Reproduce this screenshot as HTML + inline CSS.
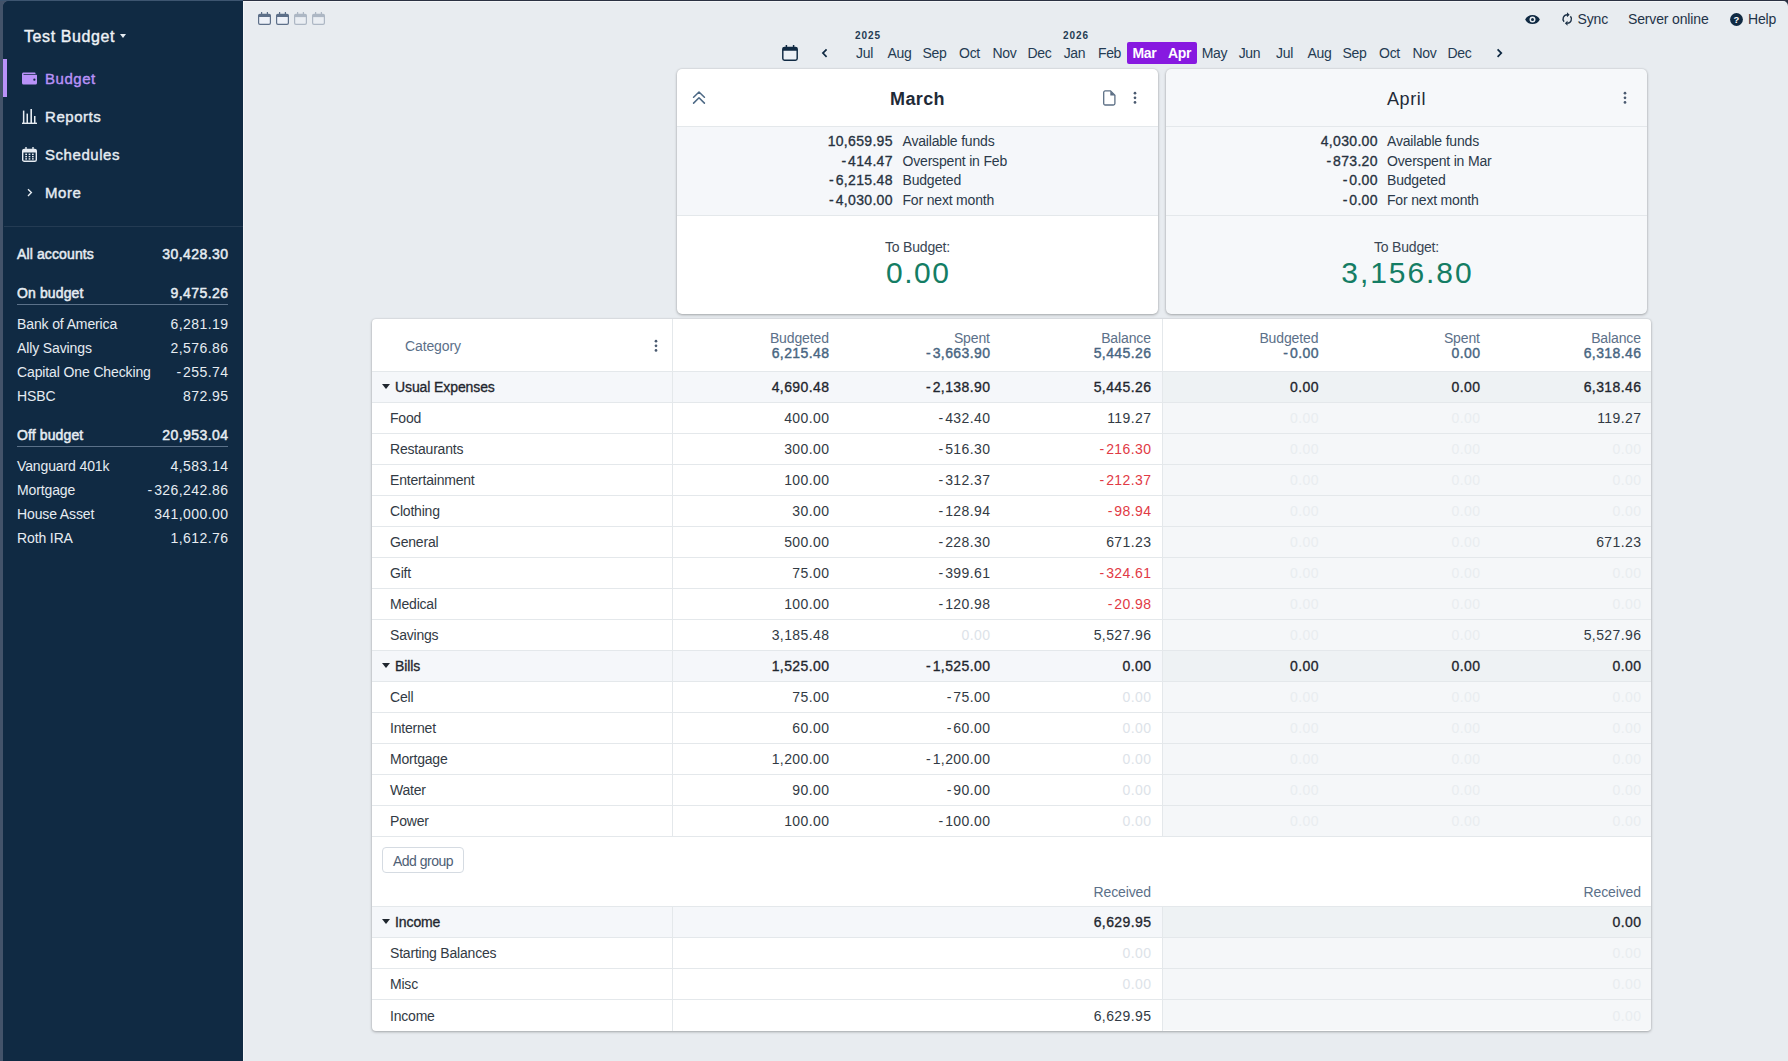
<!DOCTYPE html>
<html lang="en">
<head>
<meta charset="utf-8">
<title>Budget - Actual</title>
<style>
*{box-sizing:border-box}
html,body{margin:0;padding:0}
body{width:1788px;height:1061px;overflow:hidden;position:relative;background:#43536a;font-family:"Liberation Sans",sans-serif;font-size:13px;color:#102a43;line-height:1.5}
.abs{position:absolute}
.m{letter-spacing:2px}
#app{position:absolute;left:3px;top:1px;width:1785px;height:1060px;background:#102a43;border-top-left-radius:6px;border-top-right-radius:5px;overflow:hidden}
#topline{position:absolute;left:0;top:0;width:1788px;height:1px;background:linear-gradient(90deg,#3d5570 0,#3d5570 243px,#2b3142 243px)}
#hl{position:absolute;left:240px;top:0;width:1545px;height:1060px;background:#e8ecf0;box-shadow:inset 1px 1px 0 rgba(255,255,255,.5)}
#side{position:absolute;left:0;top:0;width:240px;height:1060px;background:#102a43;color:#e6ecf2}
#side .title{position:absolute;left:21px;top:25px;height:22px;line-height:22px;font-size:16px;font-weight:400;-webkit-text-stroke:.4px currentColor;color:#eef2f6;letter-spacing:.6px}
#side .caret{position:absolute;left:117px;top:33px;width:0;height:0;border-left:3.6px solid transparent;border-right:3.6px solid transparent;border-top:4.6px solid #e6ecf2}
.nav{position:absolute;left:0;width:240px;height:38px;line-height:38px;font-size:15px;font-weight:400;-webkit-text-stroke:.4px currentColor;color:#e6ecf2;letter-spacing:.55px}
.nav span{position:absolute;left:42px;top:1px}
.nav svg{position:absolute;left:19px;top:12px}
.nav.sel{color:#b992f8}
.nav.sel:before{content:"";position:absolute;left:0;top:0;width:4px;height:38px;background:#b992f8}
#side .hr{position:absolute;left:1px;top:225px;width:239px;height:1px;background:#243b53}
.acct{position:absolute;left:14px;width:211px;height:20px;line-height:20px;font-size:14px;color:#e6ecf2;letter-spacing:-.12px;white-space:nowrap}
.acct .n{position:absolute;right:0;top:0;font-size:14px;letter-spacing:.42px;margin-right:-.42px}
.acct.h{font-weight:400;-webkit-text-stroke:.5px currentColor;letter-spacing:.12px;font-size:14px}
.acct.u:after{content:"";position:absolute;left:0;right:0;top:21px;height:1px;background:#5b7189}
/* top bar */
.tb{position:absolute;top:8px;height:20px;line-height:20px;font-size:14px;color:#1f3348;letter-spacing:-.15px;white-space:nowrap}
/* month picker */
.mp{position:absolute;top:41px;width:35px;height:22px;line-height:23px;text-align:center;font-size:14px;color:#243b53;letter-spacing:-.3px}
.mp.s{background:#8719e0;color:#fff;font-weight:700;letter-spacing:-.35px;font-size:14px}
.yr{position:absolute;top:29px;height:12px;line-height:12px;font-size:10px;font-weight:700;color:#243b53;letter-spacing:.9px}
/* cards */
.card{position:absolute;top:68px;width:481px;height:245px;border-radius:5px;background:#fff;box-shadow:0 1px 3px rgba(0,0,0,.28),0 0 2px rgba(0,0,0,.12);overflow:hidden}
.card .hd{position:absolute;left:0;top:0;width:100%;height:58px;border-bottom:1px solid #e4e8eb}
.card .ttl{position:absolute;left:0;width:100%;top:16px;height:28px;line-height:28px;text-align:center;font-size:18px;color:#1f2a37}
.card .mid{position:absolute;left:0;top:58px;width:100%;height:89px;background:#f5f7fa;border-bottom:1px solid #e4e8eb}
.card .r{position:absolute;height:20px;line-height:20px;font-size:14px;color:#2b3a4a;white-space:nowrap}
.card .r.n{font-weight:400;-webkit-text-stroke:.32px currentColor;letter-spacing:.32px;text-align:right;color:#27323f}
.card .r.l{letter-spacing:-.18px}
.card .tbl{position:absolute;left:0;width:100%;top:168px;height:20px;line-height:20px;text-align:center;font-size:14px;color:#3a4654;letter-spacing:-.2px}
.card .amt{position:absolute;left:0;width:100%;top:186px;height:36px;line-height:36px;text-align:center;font-size:30px;color:#147d64;letter-spacing:1.5px;text-indent:1.5px}
/* table */
#tbl{position:absolute;left:369px;top:318px;width:1279px;height:712px;background:#fff;border-radius:4px;box-shadow:0 1px 3px rgba(0,0,0,.28),0 0 2px rgba(0,0,0,.12);overflow:hidden}
.vb{position:absolute;top:0;width:1px;height:712px;background:#e4e8eb;z-index:3}
.row{position:absolute;left:0;width:1279px;height:31px;border-bottom:1px solid #e4e8eb;line-height:30px;font-size:14px;color:#323a44}
.row.g{background:#f5f7fa;font-weight:400;-webkit-text-stroke:.32px currentColor;color:#1f262e}
.row .apr{position:absolute;left:791px;top:0;width:488px;height:30px;background:#f5f7f9}
.row.g .apr{background:#eef2f4}
.row .c{position:absolute;left:18px;top:0;letter-spacing:-.2px;white-space:nowrap}
.row.g .c{left:23px;top:0;letter-spacing:-.1px;font-size:14px}
.row.g .tri{position:absolute;left:9.7px;top:12.3px;width:0;height:0;border-left:4.3px solid transparent;border-right:4.3px solid transparent;border-top:5.6px solid #1f262e}
.v{position:absolute;top:0;white-space:nowrap;letter-spacing:.4px;margin-right:-.4px;z-index:2}
.v.z{color:#dde3e9}
.v.az{color:#e9edf0}
.v.neg{color:#e13a45}
.hdr{position:absolute;left:0;top:0;width:1279px;height:53px;border-bottom:1px solid #e4e8eb;color:#5b7089;font-size:14px}
.hdr .t{position:absolute;white-space:nowrap;height:16px;line-height:16px;letter-spacing:-.12px;margin-right:.12px}
.hdr .t.b{font-weight:400;-webkit-text-stroke:.4px currentColor;letter-spacing:.4px;margin-right:-.4px;color:#486581}
.rcv{position:absolute;white-space:nowrap;height:16px;line-height:16px;letter-spacing:-.12px;margin-right:.12px;color:#5b7089;font-size:14px}
#addg{position:absolute;left:10px;top:528px;width:82px;height:26px;line-height:27px;border:1px solid #d5dbe2;border-radius:4px;text-align:center;font-size:14px;color:#4e6075;letter-spacing:-.5px;background:#fff}
</style>
</head>
<body>
<div class="abs" style="right:0;top:0;width:8px;height:8px;background:#2b3142"></div>
<div id="app">
<div id="hl"></div>
<div id="side">
<div class="title">Test Budget</div><div class="caret"></div>
<div class="nav sel" style="top:58px"><svg width="15" height="15" viewBox="0 0 20 20"><path fill="currentColor" d="M0 4c0-1.1.9-2 2-2h15a1 1 0 0 1 1 1v1H2v1h17a1 1 0 0 1 1 1v10a2 2 0 0 1-2 2H2a2 2 0 0 1-2-2V4zm16.5 9a1.5 1.5 0 1 0 0-3 1.5 1.5 0 0 0 0 3z"/></svg><span>Budget</span></div>
<div class="nav" style="top:96px"><svg width="15" height="15" viewBox="0 0 15 15"><g fill="currentColor"><rect x="0" y="13.6" width="15" height="1.4"/><rect x="0.9" y="1.6" width="1.5" height="12.5"/><rect x="4.5" y="4.6" width="1.5" height="9.5"/><rect x="8.4" y="0" width="1.6" height="14"/><rect x="12" y="7" width="1.5" height="7"/></g></svg><span>Reports</span></div>
<div class="nav" style="top:134px"><svg width="15" height="15" viewBox="0 0 15 15"><g fill="none" stroke="currentColor"><rect x="0.7" y="2.4" width="13.6" height="11.9" rx="1.6" stroke-width="1.4"/><path d="M0.7 4.2h13.6" stroke-width="2.6"/><path d="M4 0v3M11 0v3" stroke-width="1.4"/></g><g fill="currentColor"><rect x="3.3" y="6.6" width="1.7" height="1.4"/><rect x="6.65" y="6.6" width="1.7" height="1.4"/><rect x="10" y="6.6" width="1.7" height="1.4"/><rect x="3.3" y="8.9" width="1.7" height="1.4"/><rect x="6.65" y="8.9" width="1.7" height="1.4"/><rect x="10" y="8.9" width="1.7" height="1.4"/><rect x="3.3" y="11.2" width="1.7" height="1.4"/><rect x="6.65" y="11.2" width="1.7" height="1.4"/><rect x="10" y="11.2" width="1.7" height="1.4"/></g></svg><span>Schedules</span></div>
<div class="nav" style="top:172px"><svg width="15" height="15" viewBox="0 0 15 15"><path d="M6 4.2 9.4 7.6 6 11" fill="none" stroke="currentColor" stroke-width="1.35"/></svg><span>More</span></div>
<div class="hr"></div>
<div class="acct h" style="top:243px">All accounts<span class="n">30,428.30</span></div>
<div class="acct h u" style="top:282px">On budget<span class="n">9,475.26</span></div>
<div class="acct " style="top:313px">Bank of America<span class="n">6,281.19</span></div>
<div class="acct " style="top:337px">Ally Savings<span class="n">2,576.86</span></div>
<div class="acct " style="top:361px">Capital One Checking<span class="n"><span class="m">-</span>255.74</span></div>
<div class="acct " style="top:385px">HSBC<span class="n">872.95</span></div>
<div class="acct h u" style="top:424px">Off budget<span class="n">20,953.04</span></div>
<div class="acct " style="top:455px">Vanguard 401k<span class="n">4,583.14</span></div>
<div class="acct " style="top:479px">Mortgage<span class="n"><span class="m">-</span>326,242.86</span></div>
<div class="acct " style="top:503px">House Asset<span class="n">341,000.00</span></div>
<div class="acct " style="top:527px">Roth IRA<span class="n">1,612.76</span></div>
</div>
<svg class="abs" style="left:255px;top:11px;opacity:1" width="13" height="13" viewBox="0 0 13 13"><g fill="none" stroke="#5d6f88"><rect x="0.6" y="2.3" width="11.8" height="10.1" rx="1.4" stroke-width="1.2" fill="#edf1f8"/><path d="M0.6 3.9h11.8" stroke-width="2.4"/><path d="M3.6 0v2.6M9.4 0v2.6" stroke-width="1.2"/></g></svg>
<svg class="abs" style="left:273px;top:11px;opacity:1" width="13" height="13" viewBox="0 0 13 13"><g fill="none" stroke="#5d6f88"><rect x="0.6" y="2.3" width="11.8" height="10.1" rx="1.4" stroke-width="1.2" fill="#edf1f8"/><path d="M0.6 3.9h11.8" stroke-width="2.4"/><path d="M3.6 0v2.6M9.4 0v2.6" stroke-width="1.2"/></g></svg>
<svg class="abs" style="left:291px;top:11px;opacity:0.42" width="13" height="13" viewBox="0 0 13 13"><g fill="none" stroke="#5d6f88"><rect x="0.6" y="2.3" width="11.8" height="10.1" rx="1.4" stroke-width="1.2" fill="#edf1f8"/><path d="M0.6 3.9h11.8" stroke-width="2.4"/><path d="M3.6 0v2.6M9.4 0v2.6" stroke-width="1.2"/></g></svg>
<svg class="abs" style="left:309px;top:11px;opacity:0.42" width="13" height="13" viewBox="0 0 13 13"><g fill="none" stroke="#5d6f88"><rect x="0.6" y="2.3" width="11.8" height="10.1" rx="1.4" stroke-width="1.2" fill="#edf1f8"/><path d="M0.6 3.9h11.8" stroke-width="2.4"/><path d="M3.6 0v2.6M9.4 0v2.6" stroke-width="1.2"/></g></svg>
<svg class="abs" style="left:1522px;top:11px" width="15" height="15" viewBox="0 0 20 20"><path fill="#102a43" d="M.2 10a11 11 0 0 1 19.6 0A11 11 0 0 1 .2 10zm9.8 4a4 4 0 1 0 0-8 4 4 0 0 0 0 8zm0-2a2 2 0 1 1 0-4 2 2 0 0 1 0 4z"/></svg>
<svg class="abs" style="left:1558px;top:11px" width="12.5" height="14" viewBox="0 0 13 14"><g fill="none" stroke="#1f3348" stroke-width="1.5"><path d="M6.5 2.6A4.4 4.4 0 0 0 3.2 9.9"/><path d="M6.5 11.4A4.4 4.4 0 0 0 9.8 4.1"/></g><path fill="#1f3348" d="M6.2 0v5.2L9 2.6zM6.8 14V8.8L4 11.4z"/></svg>
<div class="tb" style="left:1574.5px">Sync</div>
<div class="tb" style="left:1625px">Server online</div>
<svg class="abs" style="left:1727px;top:12px" width="13" height="13" viewBox="0 0 13 13"><circle cx="6.5" cy="6.5" r="6.4" fill="#102a43"/><text x="6.5" y="10" text-anchor="middle" font-family="Liberation Sans, sans-serif" font-weight="700" font-size="9.5" fill="#fff">?</text></svg>
<div class="tb" style="left:1745px">Help</div>
<svg class="abs" style="left:779px;top:44px" width="16" height="16" viewBox="0 0 16 16"><g fill="none" stroke="#102a43"><rect x="0.8" y="2.5" width="14.4" height="12.7" rx="1.7" stroke-width="1.45" fill="#edf1f6"/><path d="M0.8 4.4h14.4" stroke-width="2.8"/><path d="M4.4 0v3M11.6 0v3" stroke-width="1.5"/></g></svg>
<svg class="abs" style="left:817px;top:46px" width="9" height="12" viewBox="0 0 9 12"><path d="M6.6 2.3 2.9 6.1 6.6 9.9" fill="none" stroke="#102a43" stroke-width="1.7"/></svg>
<svg class="abs" style="left:1492px;top:46px" width="9" height="12" viewBox="0 0 9 12"><path d="M2.6 2.3 6.3 6.1 2.6 9.9" fill="none" stroke="#102a43" stroke-width="1.7"/></svg>
<div class="mp" style="left:844px">Jul</div><div class="mp" style="left:879px">Aug</div><div class="mp" style="left:914px">Sep</div><div class="mp" style="left:949px">Oct</div><div class="mp" style="left:984px">Nov</div><div class="mp" style="left:1019px">Dec</div><div class="mp" style="left:1054px">Jan</div><div class="mp" style="left:1089px">Feb</div><div class="mp s" style="left:1124px;border-radius:2px 0 0 2px">Mar</div><div class="mp s" style="left:1159px;border-radius:0 2px 2px 0">Apr</div><div class="mp" style="left:1194px">May</div><div class="mp" style="left:1229px">Jun</div><div class="mp" style="left:1264px">Jul</div><div class="mp" style="left:1299px">Aug</div><div class="mp" style="left:1334px">Sep</div><div class="mp" style="left:1369px">Oct</div><div class="mp" style="left:1404px">Nov</div><div class="mp" style="left:1439px">Dec</div>
<div class="yr" style="left:852px">2025</div><div class="yr" style="left:1060px">2026</div>
<div class="card" style="left:674px;background:#ffffff;width:481px">
<div class="hd"></div><div class="ttl" style="font-weight:700;letter-spacing:0.4px">March</div>
<svg class="abs" style="left:15px;top:22px" width="14" height="14" viewBox="0 0 14 14"><path d="M1.6 6.2 7 1 12.4 6.2M1.6 12.1 7 6.8 12.4 12.1" fill="none" stroke="#4d6985" stroke-width="1.55" stroke-linecap="round" stroke-linejoin="round"/></svg>
<svg class="abs" style="left:425.5px;top:20.5px" width="13" height="16" viewBox="0 0 13 16"><path d="M2.2 .9h5.3l4.4 4.4v8.2a1.5 1.5 0 0 1-1.5 1.5H2.2A1.5 1.5 0 0 1 .7 13.5V2.4A1.5 1.5 0 0 1 2.2.9z" fill="none" stroke="#5c6f85" stroke-width="1.3"/><path d="M7.3 1v4.5h4.5z" fill="#5c6f85"/></svg>
<svg class="abs" style="left:456px;top:21.5px" width="4" height="14" viewBox="0 0 4 14"><g fill="#4a5a70"><circle cx="2" cy="2.2" r="1.35"/><circle cx="2" cy="6.8" r="1.35"/><circle cx="2" cy="11.4" r="1.35"/></g></svg>
<div class="mid" style="background:#f5f7fa"></div>
<div class="r n" style="right:265.18px;top:62.0px">10,659.95</div><div class="r l" style="left:225.5px;top:62.0px">Available funds</div>
<div class="r n" style="right:265.18px;top:81.6px"><span class="m">-</span>414.47</div><div class="r l" style="left:225.5px;top:81.6px">Overspent in Feb</div>
<div class="r n" style="right:265.18px;top:101.2px"><span class="m">-</span>6,215.48</div><div class="r l" style="left:225.5px;top:101.2px">Budgeted</div>
<div class="r n" style="right:265.18px;top:120.8px"><span class="m">-</span>4,030.00</div><div class="r l" style="left:225.5px;top:120.8px">For next month</div>
<div class="tbl">To Budget:</div><div class="amt" style="letter-spacing:1.5px;text-indent:1.5px">0.00</div>
</div>
<div class="card" style="left:1163px;background:#f6f8fa;width:481px">
<div class="hd"></div><div class="ttl" style="font-weight:400;letter-spacing:0.6px">April</div>
<svg class="abs" style="left:457px;top:21.5px" width="4" height="14" viewBox="0 0 4 14"><g fill="#4a5a70"><circle cx="2" cy="2.2" r="1.35"/><circle cx="2" cy="6.8" r="1.35"/><circle cx="2" cy="11.4" r="1.35"/></g></svg>
<div class="mid" style="background:#f6f8fa"></div>
<div class="r n" style="right:269.18px;top:62.0px">4,030.00</div><div class="r l" style="left:221px;top:62.0px">Available funds</div>
<div class="r n" style="right:269.18px;top:81.6px"><span class="m">-</span>873.20</div><div class="r l" style="left:221px;top:81.6px">Overspent in Mar</div>
<div class="r n" style="right:269.18px;top:101.2px"><span class="m">-</span>0.00</div><div class="r l" style="left:221px;top:101.2px">Budgeted</div>
<div class="r n" style="right:269.18px;top:120.8px"><span class="m">-</span>0.00</div><div class="r l" style="left:221px;top:120.8px">For next month</div>
<div class="tbl">To Budget:</div><div class="amt" style="letter-spacing:1.95px;text-indent:1.95px">3,156.80</div>
</div>
<div id="tbl">
<div class="hdr"><span class="t" style="left:33px;top:18.5px;margin:0">Category</span><svg class="abs" style="left:282px;top:19.5px" width="4" height="14" viewBox="0 0 4 14"><g fill="#4a5a70"><circle cx="2" cy="2.2" r="1.35"/><circle cx="2" cy="6.8" r="1.35"/><circle cx="2" cy="11.4" r="1.35"/></g></svg><span class="t" style="right:822.0px;top:10.5px">Budgeted</span><span class="t b" style="right:822.0px;top:25.5px">6,215.48</span><span class="t" style="right:661.0px;top:10.5px">Spent</span><span class="t b" style="right:661.0px;top:25.5px"><span class="m">-</span>3,663.90</span><span class="t" style="right:500.0px;top:10.5px">Balance</span><span class="t b" style="right:500.0px;top:25.5px">5,445.26</span><span class="t" style="right:332.5px;top:10.5px">Budgeted</span><span class="t b" style="right:332.5px;top:25.5px"><span class="m">-</span>0.00</span><span class="t" style="right:171.0px;top:10.5px">Spent</span><span class="t b" style="right:171.0px;top:25.5px">0.00</span><span class="t" style="right:10.0px;top:10.5px">Balance</span><span class="t b" style="right:10.0px;top:25.5px">6,318.46</span></div>
<div class="vb" style="left:300px;height:518px"></div><div class="vb" style="left:790px;height:518px"></div><div class="vb" style="left:300px;top:588px;height:124px"></div><div class="vb" style="left:790px;top:588px;height:124px"></div>
<div class="row g" style="top:53px"><div class="apr"></div><div class="tri"></div><span class="c">Usual Expenses</span><span class="v" style="right:822.0px">4,690.48</span><span class="v" style="right:661.0px"><span class="m">-</span>2,138.90</span><span class="v" style="right:500.0px">5,445.26</span><span class="v" style="right:332.5px">0.00</span><span class="v" style="right:171.0px">0.00</span><span class="v" style="right:10.0px">6,318.46</span></div>
<div class="row" style="top:84px"><div class="apr"></div><span class="c">Food</span><span class="v" style="right:822.0px">400.00</span><span class="v" style="right:661.0px"><span class="m">-</span>432.40</span><span class="v" style="right:500.0px">119.27</span><span class="v az" style="right:332.5px">0.00</span><span class="v az" style="right:171.0px">0.00</span><span class="v" style="right:10.0px">119.27</span></div>
<div class="row" style="top:115px"><div class="apr"></div><span class="c">Restaurants</span><span class="v" style="right:822.0px">300.00</span><span class="v" style="right:661.0px"><span class="m">-</span>516.30</span><span class="v neg" style="right:500.0px"><span class="m">-</span>216.30</span><span class="v az" style="right:332.5px">0.00</span><span class="v az" style="right:171.0px">0.00</span><span class="v az" style="right:10.0px">0.00</span></div>
<div class="row" style="top:146px"><div class="apr"></div><span class="c">Entertainment</span><span class="v" style="right:822.0px">100.00</span><span class="v" style="right:661.0px"><span class="m">-</span>312.37</span><span class="v neg" style="right:500.0px"><span class="m">-</span>212.37</span><span class="v az" style="right:332.5px">0.00</span><span class="v az" style="right:171.0px">0.00</span><span class="v az" style="right:10.0px">0.00</span></div>
<div class="row" style="top:177px"><div class="apr"></div><span class="c">Clothing</span><span class="v" style="right:822.0px">30.00</span><span class="v" style="right:661.0px"><span class="m">-</span>128.94</span><span class="v neg" style="right:500.0px"><span class="m">-</span>98.94</span><span class="v az" style="right:332.5px">0.00</span><span class="v az" style="right:171.0px">0.00</span><span class="v az" style="right:10.0px">0.00</span></div>
<div class="row" style="top:208px"><div class="apr"></div><span class="c">General</span><span class="v" style="right:822.0px">500.00</span><span class="v" style="right:661.0px"><span class="m">-</span>228.30</span><span class="v" style="right:500.0px">671.23</span><span class="v az" style="right:332.5px">0.00</span><span class="v az" style="right:171.0px">0.00</span><span class="v" style="right:10.0px">671.23</span></div>
<div class="row" style="top:239px"><div class="apr"></div><span class="c">Gift</span><span class="v" style="right:822.0px">75.00</span><span class="v" style="right:661.0px"><span class="m">-</span>399.61</span><span class="v neg" style="right:500.0px"><span class="m">-</span>324.61</span><span class="v az" style="right:332.5px">0.00</span><span class="v az" style="right:171.0px">0.00</span><span class="v az" style="right:10.0px">0.00</span></div>
<div class="row" style="top:270px"><div class="apr"></div><span class="c">Medical</span><span class="v" style="right:822.0px">100.00</span><span class="v" style="right:661.0px"><span class="m">-</span>120.98</span><span class="v neg" style="right:500.0px"><span class="m">-</span>20.98</span><span class="v az" style="right:332.5px">0.00</span><span class="v az" style="right:171.0px">0.00</span><span class="v az" style="right:10.0px">0.00</span></div>
<div class="row" style="top:301px"><div class="apr"></div><span class="c">Savings</span><span class="v" style="right:822.0px">3,185.48</span><span class="v z" style="right:661.0px">0.00</span><span class="v" style="right:500.0px">5,527.96</span><span class="v az" style="right:332.5px">0.00</span><span class="v az" style="right:171.0px">0.00</span><span class="v" style="right:10.0px">5,527.96</span></div>
<div class="row g" style="top:332px"><div class="apr"></div><div class="tri"></div><span class="c">Bills</span><span class="v" style="right:822.0px">1,525.00</span><span class="v" style="right:661.0px"><span class="m">-</span>1,525.00</span><span class="v" style="right:500.0px">0.00</span><span class="v" style="right:332.5px">0.00</span><span class="v" style="right:171.0px">0.00</span><span class="v" style="right:10.0px">0.00</span></div>
<div class="row" style="top:363px"><div class="apr"></div><span class="c">Cell</span><span class="v" style="right:822.0px">75.00</span><span class="v" style="right:661.0px"><span class="m">-</span>75.00</span><span class="v z" style="right:500.0px">0.00</span><span class="v az" style="right:332.5px">0.00</span><span class="v az" style="right:171.0px">0.00</span><span class="v az" style="right:10.0px">0.00</span></div>
<div class="row" style="top:394px"><div class="apr"></div><span class="c">Internet</span><span class="v" style="right:822.0px">60.00</span><span class="v" style="right:661.0px"><span class="m">-</span>60.00</span><span class="v z" style="right:500.0px">0.00</span><span class="v az" style="right:332.5px">0.00</span><span class="v az" style="right:171.0px">0.00</span><span class="v az" style="right:10.0px">0.00</span></div>
<div class="row" style="top:425px"><div class="apr"></div><span class="c">Mortgage</span><span class="v" style="right:822.0px">1,200.00</span><span class="v" style="right:661.0px"><span class="m">-</span>1,200.00</span><span class="v z" style="right:500.0px">0.00</span><span class="v az" style="right:332.5px">0.00</span><span class="v az" style="right:171.0px">0.00</span><span class="v az" style="right:10.0px">0.00</span></div>
<div class="row" style="top:456px"><div class="apr"></div><span class="c">Water</span><span class="v" style="right:822.0px">90.00</span><span class="v" style="right:661.0px"><span class="m">-</span>90.00</span><span class="v z" style="right:500.0px">0.00</span><span class="v az" style="right:332.5px">0.00</span><span class="v az" style="right:171.0px">0.00</span><span class="v az" style="right:10.0px">0.00</span></div>
<div class="row" style="top:487px"><div class="apr"></div><span class="c">Power</span><span class="v" style="right:822.0px">100.00</span><span class="v" style="right:661.0px"><span class="m">-</span>100.00</span><span class="v z" style="right:500.0px">0.00</span><span class="v az" style="right:332.5px">0.00</span><span class="v az" style="right:171.0px">0.00</span><span class="v az" style="right:10.0px">0.00</span></div>
<div id="addg">Add group</div>
<span class="rcv" style="right:500.0px;top:565px">Received</span><span class="rcv" style="right:10.0px;top:565px">Received</span>
<div class="abs" style="left:0;top:587px;width:1279px;height:1px;background:#e4e8eb"></div>
<div class="row g" style="top:588px"><div class="apr"></div><div class="tri"></div><span class="c">Income</span><span class="v" style="right:500.0px">6,629.95</span><span class="v" style="right:10.0px">0.00</span></div>
<div class="row" style="top:619px"><div class="apr"></div><span class="c">Starting Balances</span><span class="v z" style="right:500.0px">0.00</span><span class="v az" style="right:10.0px">0.00</span></div>
<div class="row" style="top:650px"><div class="apr"></div><span class="c">Misc</span><span class="v z" style="right:500.0px">0.00</span><span class="v az" style="right:10.0px">0.00</span></div>
<div class="row" style="top:681px;line-height:32px;border-bottom:0"><div class="apr"></div><span class="c">Income</span><span class="v" style="right:500.0px">6,629.95</span><span class="v az" style="right:10.0px">0.00</span></div>
</div>
</div>
<div id="topline"></div>
</body>
</html>
